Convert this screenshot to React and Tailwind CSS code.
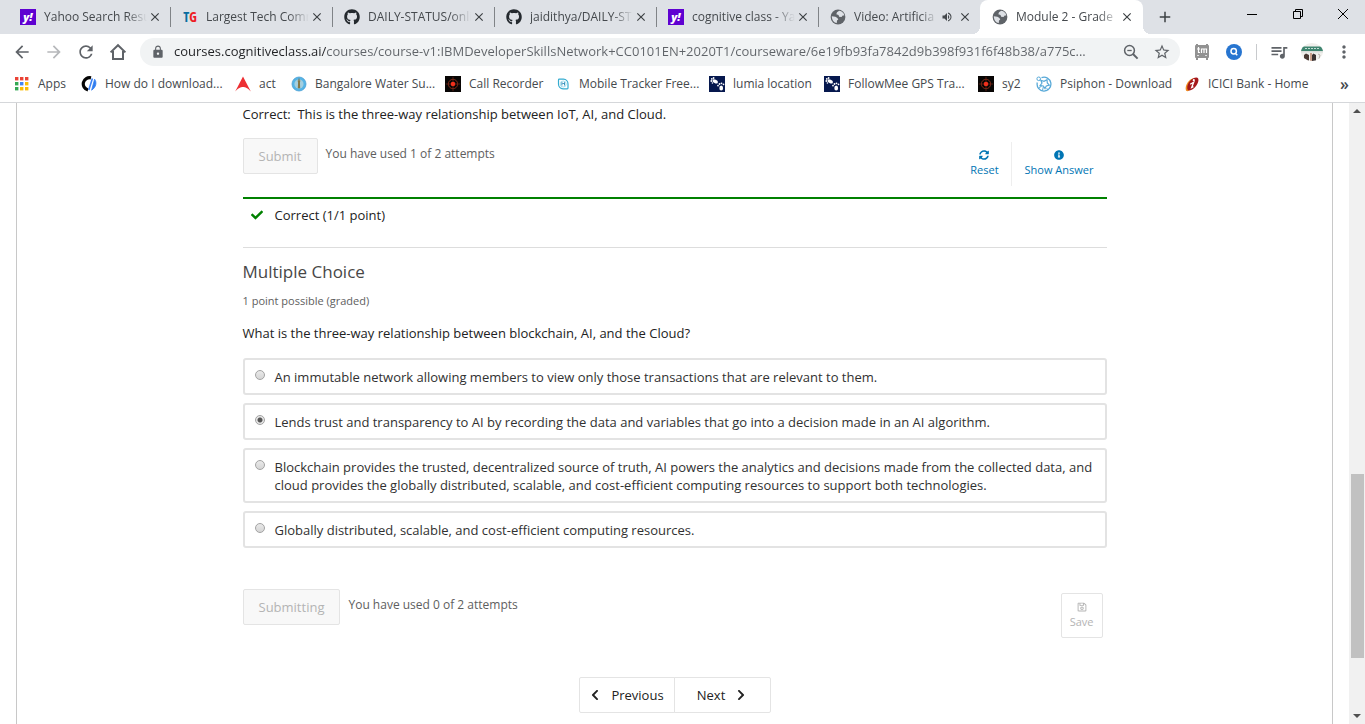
import React, { useState } from "react";
import {
  MdArrowBack, MdArrowForward, MdRefresh, MdLock, MdStarBorder, MdMoreVert,
  MdQueueMusic, MdVolumeUp, MdClose, MdAdd,
} from "react-icons/md";
import {
  FaGithub, FaCheck, FaSyncAlt, FaInfoCircle, FaRegSave, FaChevronLeft, FaChevronRight,
} from "react-icons/fa";

function YahooIcon() {
  return (
    <span className="flex size-4 items-center justify-center bg-[#5f01d1] pb-0.5 text-[11px] font-extrabold leading-none text-white italic">
      y!
    </span>
  );
}

function TgIcon() {
  return (
    <span className="flex h-4 w-4 items-center justify-center font-['Open_Sans_Condensed','Roboto',sans-serif] text-[14px] leading-none font-black">
      <span className="text-[#0a6d9e]">T</span>
      <span className="text-[#ee1c25]">G</span>
    </span>
  );
}

function GlobeIcon() {
  return (
    <svg viewBox="0 0 16 16" className="size-4">
      <circle cx="8" cy="8" r="7.400" fill="#5f6368" />
      <path d="M9.200 1.800 7 3.200 6.300 5.200l2.200.8.600 1.700 2.400.3 1.200-1.400 1.600-.2c-.2-2.200-2.200-4.200-5.100-4.600z" fill="#dee1e6" />
      <path d="M1.800 7.200l3.600.6 2 1.200.9 1.400-1.300 1.200-.2 2.500C4 13.600 1.800 11 1.800 7.200z" fill="#dee1e6" />
    </svg>
  );
}

function HomeIcon() {
  return (
    <svg viewBox="0 0 18 18" className="size-[18px]" fill="none" stroke="#5f6368" strokeWidth="2">
      <path d="M1.6 9.4 9 2.2l7.4 7.2M4 8v8h10V8" />
    </svg>
  );
}

function ZoomOutIcon() {
  return (
    <svg viewBox="0 0 16 16" className="size-4" fill="none" stroke="currentColor" strokeWidth="1.500">
      <circle cx="6.500" cy="6.500" r="4.900" />
      <path d="M4.300 6.500h4.400" strokeWidth="1.300" />
      <path d="m10 10 4.600 4.600" strokeWidth="2" />
    </svg>
  );
}

function AppsIcon() {
  const colors = ["#ea4335", "#ea4335", "#ea4335", "#34a853", "#4285f4", "#fbbc04", "#34a853", "#fbbc04", "#fbbc04"];
  return (
    <svg viewBox="0 0 14 14" className="mx-px size-3.5">
      {colors.map((c, i) => (
        <rect key={i} x={(i % 3) * 5} y={Math.floor(i / 3) * 5} width="3.4" height="3.4" fill={c} />
      ))}
    </svg>
  );
}

function DownloadIcon() {
  return (
    <svg viewBox="0 0 16 16" className="size-4" fill="none">
      <path d="M10 1.900A6.200 6.200 0 1 0 7 14" stroke="#050505" strokeWidth="3.200" />
      <path d="M11.400 2.500 7.800 14" stroke="#3b82f6" strokeWidth="1.600" />
      <path d="M13.600 3.200c2.400 3 1.600 8-3 11z" fill="#2f7cf0" stroke="#2f7cf0" strokeWidth=".8" />
    </svg>
  );
}

function ActIcon() {
  return (
    <svg viewBox="0 0 16 16" className="size-4">
      <path d="M8 .5 15.800 15.500C12.500 12 10.500 11 8 11S3.500 12 .2 15.500z" fill="#ed2f33" />
    </svg>
  );
}

function WaterIcon() {
  return (
    <svg viewBox="0 0 16 16" className="size-4">
      <circle cx="8" cy="8" r="7" fill="#55b4e6" stroke="#4a9fd4" strokeWidth=".8" />
      <circle cx="8" cy="8" r="4.600" fill="#a3cfe0" />
      <path d="M6.500 4.500h3l-.6 2 .3 5.500H6.800l.3-5.500z" fill="#98864e" />
      <path d="M8 2.500v10" stroke="#716a43" strokeWidth="1" />
    </svg>
  );
}

function TargetIcon() {
  return (
    <svg viewBox="0 0 16 16" className="size-4">
      <rect width="16" height="16" fill="#080504" />
      <circle cx="8" cy="8" r="4.700" fill="none" stroke="#7c2a18" strokeWidth="1" />
      <path d="M8 .8v14.400M.8 8h14.400" stroke="#6b2114" strokeWidth=".8" />
      <circle cx="8" cy="8" r="2.300" fill="#f0301c" />
    </svg>
  );
}

function TrackerIcon() {
  return (
    <svg viewBox="0 0 16 16" className="size-4" fill="none" stroke="#35acd0">
      <path d="M3.500 8V4q0-.8.8-.8H8.500A4.700 4.700 0 0 1 13 8M13 8v4q0 .8-.8.8H8A4.700 4.700 0 0 1 3.500 8" strokeWidth="1.200" />
      <circle cx="8.200" cy="8" r="3" stroke="#8fd6e8" strokeWidth=".8" />
      <path d="M6.900 9.500v-3l1.300 1.400 1.300-1.400v3" stroke="#2487b5" strokeWidth=".9" />
    </svg>
  );
}

function FeetIcon() {
  return (
    <svg viewBox="0 0 16 16" className="size-4">
      <rect width="16" height="16" fill="#06184e" />
      <g fill="#fff">
        <ellipse cx="6.200" cy="5.400" rx="2.900" ry="1.700" transform="rotate(25 6.200 5.400)" />
        <circle cx="2.300" cy="5" r=".9" /><circle cx="2.800" cy="2.900" r=".9" />
        <circle cx="4.600" cy="2" r=".9" /><circle cx="3.400" cy="7" r=".8" />
        <ellipse cx="12.200" cy="12" rx="1.900" ry="2.600" />
        <circle cx="9" cy="9.600" r=".9" /><circle cx="10.500" cy="8" r=".9" />
        <circle cx="12.500" cy="7.300" r=".9" /><circle cx="14.500" cy="8.300" r=".9" />
      </g>
    </svg>
  );
}

function PsiphonIcon() {
  return (
    <svg viewBox="0 0 16 16" className="size-4" fill="none" stroke="#58a9d8">
      <path d="M5.500 1.700A6.900 6.900 0 1 1 1.300 6.500" strokeWidth="1.300" />
      <circle cx="2.700" cy="2.800" r="1.800" strokeWidth="1" />
      <path d="M4.800 4.200 8 5.300l3-1.500.3 3.200 2 2.200-3 .8-1.300 2.500L7.300 10l-3.300-.3L6 7z" strokeWidth="1.200" />
      <path d="m2.500 12.500 3.300-2.700M10.500 12.500l2 1.300M6.500 14.500l.8-3.500" />
    </svg>
  );
}

function IciciIcon() {
  return (
    <svg viewBox="0 0 16 16" className="size-4">
      <path d="M2 14.500C.2 10 5 2 11 2.300L5 14.800c-1 .6-2.400.5-3-.3z" fill="#f08a1d" />
      <path d="M3.500 13.500C2 9 7 1.500 12.500 1.500c3 .2 2.300 5-.3 8.300-2.200 3-6.700 6.500-8.700 3.700z" fill="#a5181b" />
      <circle cx="9.800" cy="4.200" r="1.100" fill="#fff" />
      <path d="m6.200 8.200 3.500-2-2 5.200 1.700-.8" fill="none" stroke="#fff" strokeWidth="1.300" />
    </svg>
  );
}

function AvatarIcon() {
  return (
    <svg viewBox="0 0 22 18" className="h-[18px] w-[22px]">
      <clipPath id="avatar"><ellipse cx="11" cy="9" rx="11" ry="9" /></clipPath>
      <g clipPath="url(#avatar)">
        <rect width="22" height="18" fill="#f0efec" />
        <rect y="3.500" width="22" height="4.500" fill="#3f8570" />
        <path d="M4 5.500h15" stroke="#c3ddd4" strokeDasharray="2 1" />
        <rect y="8" width="22" height="1.500" fill="#d9ded9" />
        <path d="M3 18v-6l2-1.500 3 1.500v6z" fill="#4a3a34" />
        <rect x="9" y="10" width="2" height="8" fill="#c9a08c" />
        <path d="M11 18v-6l1.500-1.500L15 12v6z" fill="#3a3130" />
        <path d="M17 11l2 1-1 4" stroke="#b9b3ad" fill="none" />
      </g>
    </svg>
  );
}

function TmIcon() {
  return (
    <svg viewBox="0 0 16 18" className="h-[18px] w-4">
      <path d="M2 2h12q1 0 1 1v11q0 1-1 1H2q-1 0-1-1V3q0-1 1-1z" fill="#929292" />
      <path d="M3 15v2M13 15v2M3 1v1M13 1v1" stroke="#929292" strokeWidth="2" />
      <path d="M4.500 4v5.500h1.500M3 6h3M7.500 10V6h5v4M10 6v4" fill="none" stroke="#fff" strokeWidth="1.200" />
      <path d="M3 12.500h2M11 12.500h2" stroke="#ddd" />
    </svg>
  );
}

const tabs = [
  { title: "Yahoo Search Resu", icon: <YahooIcon /> },
  { title: "Largest Tech Comr", icon: <TgIcon /> },
  { title: "DAILY-STATUS/onli", icon: <FaGithub className="size-4 text-[#24292e]" /> },
  { title: "jaidithya/DAILY-ST", icon: <FaGithub className="size-4 text-[#24292e]" /> },
  { title: "cognitive class - Ya", icon: <YahooIcon /> },
  { title: "Video: Artificia", icon: <GlobeIcon />, audio: true },
  { title: "Module 2 - Grade", icon: <GlobeIcon />, active: true },
];

const bookmarks = [
  ["Apps", <AppsIcon />, "w-[67px]"],
  ["How do I download...", <DownloadIcon />, "w-[154px]"],
  ["act", <ActIcon />, "w-14"],
  ["Bangalore Water Su...", <WaterIcon />, "w-[154px]"],
  ["Call Recorder", <TargetIcon />, "w-[110px]"],
  ["Mobile Tracker Free...", <TrackerIcon />, "w-[154px]"],
  ["lumia location", <FeetIcon />, "w-[115px]"],
  ["FollowMee GPS Tra...", <FeetIcon />, "w-[154px]"],
  ["sy2", <TargetIcon />, "w-[58px]"],
  ["Psiphon - Download", <PsiphonIcon />, "w-[148px]"],
  ["ICICI Bank - Home", <IciciIcon />, "w-[148px]"],
];

const options = [
  "An immutable network allowing members to view only those transactions that are relevant to them.",
  "Lends trust and transparency to AI by recording the data and variables that go into a decision made in an AI algorithm.",
  "Blockchain provides the trusted, decentralized source of truth, AI powers the analytics and decisions made from the collected data, and cloud provides the globally distributed, scalable, and cost-efficient computing resources to support both technologies.",
  "Globally distributed, scalable, and cost-efficient computing resources.",
];

function Tab({ title, icon, audio, active }) {
  return (
    <div
      className={
        active
          ? "relative flex h-[34px] w-[163px] items-center rounded-t-lg bg-white pr-2 pl-3"
          : "relative flex h-[34px] w-[162px] items-center pr-[7px] pl-3"
      }
    >
      {active && (
        <>
          <span className="absolute bottom-0 -left-2 size-2 bg-[radial-gradient(circle_at_0_0,#dee1e6_8px,#fff_8px)]" />
          <span className="absolute -right-2 bottom-0 size-2 bg-[radial-gradient(circle_at_100%_0,#dee1e6_8px,#fff_8px)]" />
        </>
      )}
      <button role="tab" aria-selected={!!active} className="flex min-w-0 flex-1 items-center gap-2">
        <span className="shrink-0">{icon}</span>
        <span className="min-w-0 flex-1 overflow-hidden mask-r-from-80% mask-r-to-100% text-left whitespace-nowrap">
          {title}
        </span>
      </button>
      {audio && <MdVolumeUp className="mx-1 size-3 shrink-0 text-[#45494d]" />}
      <button aria-label={"Close " + title} className="flex size-4 shrink-0 items-center justify-center">
        <MdClose className="size-3.5 text-[#3c4043]" />
      </button>
    </div>
  );
}

function BrowserChrome() {
  return (
    <header className="shrink-0 border-b border-[#d5d7da] bg-white text-[12px] text-[#45494d]">
      <div className="flex bg-[#dee1e6] pl-2">
        <div role="tablist" className="flex">
          {tabs.map((t, i) => (
            <React.Fragment key={t.title}>
              <Tab {...t} />
              {i < 5 && <span className="-mr-px h-5 w-px self-center bg-[#808387]" />}
            </React.Fragment>
          ))}
        </div>
        <button aria-label="New tab" className="ml-3 flex w-5 items-center justify-center">
          <MdAdd className="size-[18px] text-[#3c4043]" />
        </button>
        <div className="ml-auto flex h-7 items-center text-black">
          <button aria-label="Minimize" className="flex w-[46px] justify-center">
            <svg viewBox="0 0 10 10" className="size-2.5"><path d="M0 5.500h10" stroke="currentColor" /></svg>
          </button>
          <button aria-label="Restore" className="flex w-[46px] justify-center">
            <svg viewBox="0 0 10 10" className="size-2.5" fill="none" stroke="currentColor">
              <path d="M.5 2.500h7v7h-7zM2.500 2.500v-2h7v7h-2" />
            </svg>
          </button>
          <button aria-label="Close window" className="flex w-11 justify-center">
            <svg viewBox="0 0 10 10" className="size-2.5"><path d="m0 0 10 10M10 0 0 10" stroke="currentColor" /></svg>
          </button>
        </div>
      </div>

      <div className="flex h-9 items-center pr-[11px] pl-3">
        <div className="flex items-center gap-3 text-[#5f6368]">
          <button aria-label="Back"><MdArrowBack className="size-5" /></button>
          <button aria-label="Forward"><MdArrowForward className="size-5 text-[#b6b8bb]" /></button>
          <button aria-label="Reload"><MdRefresh className="size-5" /></button>
          <button aria-label="Home" className="px-px"><HomeIcon /></button>
        </div>
        <div className="ml-3 flex h-7 flex-1 items-center rounded-full bg-[#f1f3f4] pr-[9px] pl-[11px] text-[#5f6368]">
          <MdLock className="size-3.5 shrink-0" />
          <input
            aria-label="Address"
            defaultValue="courses.cognitiveclass.ai/courses/course-v1:IBMDeveloperSkillsNetwork+CC0101EN+2020T1/courseware/6e19fb93fa7842d9b398f931f6f48b38/a775c..."
            className="ml-[9px] min-w-0 flex-1 bg-[linear-gradient(90deg,#202124_152px,#5f6368_152px)] bg-clip-text text-[13px] text-transparent outline-none"
          />
          <button aria-label="Zoom" className="ml-2"><ZoomOutIcon /></button>
          <button aria-label="Bookmark" className="ml-3.5"><MdStarBorder className="size-[18px]" /></button>
        </div>
        <div className="ml-3.5 flex items-center">
          <button aria-label="Extension tm"><TmIcon /></button>
          <button aria-label="Search extension" className="ml-4 flex size-4 items-center justify-center rounded-full bg-[#2775d0]">
            <svg viewBox="0 0 16 16" className="size-4" fill="none" stroke="#fff" strokeWidth="1.500">
              <circle cx="7.700" cy="7.300" r="2.700" /><path d="m9.300 9.300 2 2" />
            </svg>
          </button>
          <span className="ml-3.5 h-4 w-px bg-[#c8cacd]" />
          <button aria-label="Media" className="ml-3"><MdQueueMusic className="size-5 text-[#5f6368]" /></button>
          <button aria-label="Profile" className="ml-3"><AvatarIcon /></button>
          <button aria-label="Menu" className="ml-[11px]"><MdMoreVert className="size-5 text-[#5f6368]" /></button>
        </div>
      </div>

      <nav className="flex h-8 items-center pr-4 pb-1 pl-3.5">
        {bookmarks.map(([name, icon, width]) => (
          <a key={name} href="#" className={"flex shrink-0 items-center gap-2 whitespace-nowrap " + width}>
            {icon}
            {name}
          </a>
        ))}
        <button aria-label="More bookmarks" className="ml-auto text-[16px] leading-none font-semibold">»</button>
      </nav>
    </header>
  );
}

export default function App() {
  const [selected, setSelected] = useState(1);
  return (
    <div className="flex h-screen flex-col overflow-hidden bg-white font-['Open_Sans',sans-serif]">
      <BrowserChrome />
      <div className="flex min-h-0 flex-1">
        <main className="mx-4 flex-1 overflow-hidden border-x border-[#c8c8c8] px-6 text-[13px] leading-[18px] text-[#222]">
          <div className="mx-auto max-w-[864px]">
            <p className="pt-0.5 whitespace-pre">Correct:  This is the three-way relationship between IoT, AI, and Cloud.</p>

            <div className="mt-[15px] flex items-start">
              <button disabled className="h-9 rounded-xs border border-[#e4e4e4] bg-[#f8f8f8] px-[15px] text-[#b4b4b4]">
                Submit
              </button>
              <span className="mt-[7px] ml-2 text-[12px] text-[#5e5e5e]">You have used 1 of 2 attempts</span>
              <div className="mt-1 ml-auto flex text-[11px] leading-4 text-[#0075b4]">
                <button className="flex h-11 flex-col items-center gap-0.5 border-r border-[#eee] px-3 pt-2">
                  <FaSyncAlt className="size-2.5" />
                  Reset
                </button>
                <button className="flex h-11 flex-col items-center gap-0.5 px-[13px] pt-2">
                  <FaInfoCircle className="size-2.5" />
                  Show Answer
                </button>
              </div>
            </div>

            <div className="mt-[11px] flex h-[50px] items-start border-t-2 border-[#008100] pt-[7px] pl-2">
              <FaCheck className="mt-[3px] size-3 text-[#008100]" />
              <span className="ml-3">Correct (1/1 point)</span>
            </div>

            <section className="border-t border-[#ddd]">
              <h3 className="mt-3 text-[17px] leading-6 text-[#474747]">Multiple Choice</h3>
              <p className="mt-2 text-[11px] text-[#5e5e5e]">1 point possible (graded)</p>
              <fieldset className="mt-3.5">
                <legend className="mb-4">What is the three-way relationship between blockchain, AI, and the Cloud?</legend>
                <div className="flex flex-col gap-2">
                  {options.map((text, i) => (
                    <label key={text} className="flex items-start gap-2.5 rounded-[3px] border-2 border-[#e3e3e3] pt-2 pr-2 pb-[7px] pl-2.5 text-[#313131]">
                      <input
                        type="radio"
                        name="answer"
                        checked={selected === i}
                        onChange={() => setSelected(i)}
                        className="mt-0.5 size-2.5 shrink-0 appearance-none rounded-full border border-[#a3a3a3] bg-linear-to-b from-[#e9e9e9] to-[#d5d5d5] checked:bg-[radial-gradient(circle,#555_2px,#e6e6e6_3px)]"
                      />
                      <span>{text}</span>
                    </label>
                  ))}
                </div>
              </fieldset>

              <div className="mt-[41px] flex items-start">
                <button disabled className="h-9 rounded-xs border border-[#e4e4e4] bg-[#f8f8f8] px-[15px] text-[#b4b4b4]">
                  Submitting
                </button>
                <span className="mt-[7px] ml-2 text-[12px] text-[#5e5e5e]">You have used 0 of 2 attempts</span>
                <button disabled className="mt-1 mr-1 ml-auto flex h-[45px] flex-col items-center gap-0.5 rounded-xs border border-[#e4e4e4] px-2 pt-2 text-[11px] leading-4 text-[#b4b4b4]">
                  <FaRegSave className="size-2.5" />
                  Save
                </button>
              </div>
            </section>

            <nav className="mt-[39px] flex justify-center">
              <button className="flex h-9 w-24 items-center justify-center gap-2.5 rounded-l-xs border border-[#e4e4e4]">
                <FaChevronLeft className="size-3" />
                Previous
              </button>
              <button className="-ml-px flex h-9 w-[97px] items-center justify-center gap-2.5 rounded-r-xs border border-[#e4e4e4]">
                Next
                <FaChevronRight className="size-3" />
              </button>
            </nav>
          </div>
        </main>

        <div className="flex w-4 shrink-0 flex-col items-center bg-[#f1f1f1] py-1.5">
          <svg viewBox="0 0 8 4" className="h-1 w-2"><path d="M0 4 4 0l4 4z" fill="#505050" /></svg>
          <span className="grow-[361]" />
          <span className="w-[13px] grow-[184] bg-[#c1c1c1]" />
          <span className="grow-[56]" />
          <svg viewBox="0 0 8 4" className="h-1 w-2"><path d="m0 0 4 4 4-4z" fill="#505050" /></svg>
        </div>
      </div>
    </div>
  );
}
